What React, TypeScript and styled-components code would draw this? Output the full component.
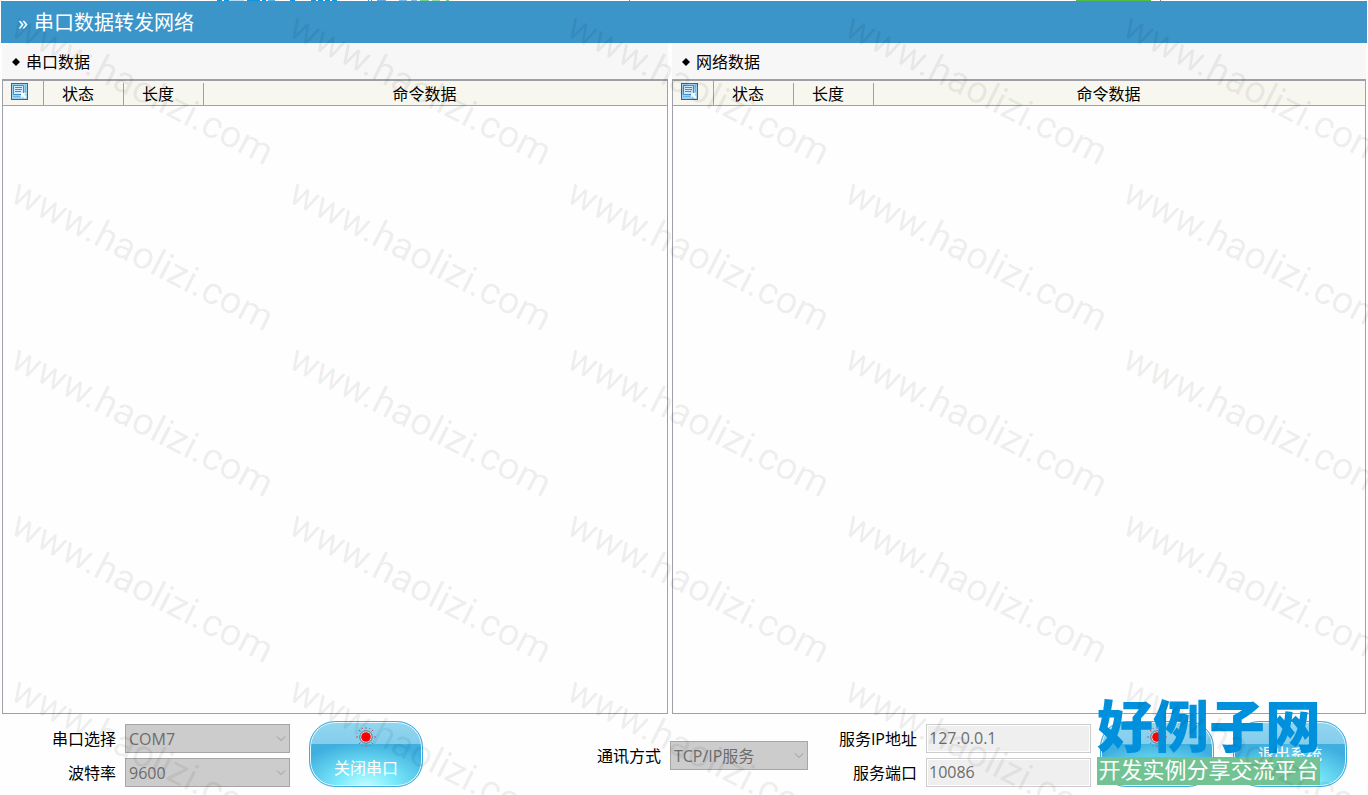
import React from "react";
import styled, { createGlobalStyle } from "styled-components";

const line = "#a0a0a8";

const GlobalStyle = createGlobalStyle`
  *, *::before, *::after { box-sizing: border-box; }
  body {
    margin: 0;
    background: #fefefe;
    color: #000;
    font: 16px/22px "Open Sans", "Noto Sans CJK SC", sans-serif;
  }
  button, input, select { font: inherit; }
`;

const Page = styled.div`
  position: relative;
  display: flex;
  flex-direction: column;
  min-height: 100vh;
  overflow: hidden;
`;

/* start, width and colour of each sliver of the window behind the title bar */
const slivers: [number, number, string][] = [
  [217, 5, "#0f95dd"],
  [224, 5, "#0f95dd"],
  [229, 15, "#b5def4"],
  [247, 13, "#0f95dd"],
  [262, 4, "#0f95dd"],
  [268, 7, "#4fb2e6"],
  [290, 5, "#0f95dd"],
  [311, 5, "#0f95dd"],
  [318, 5, "#0f95dd"],
  [325, 5, "#0f95dd"],
  [332, 5, "#0f95dd"],
  [368, 1, "#2b98dc"],
  [371, 1, "#2b98dc"],
  [377, 9, "#5aa9ea"],
  [399, 8, "#7dbcec"],
  [411, 6, "#7dbcec"],
  [420, 9, "#6fd08a"],
  [432, 8, "#8fdca4"],
  [446, 3, "#6fd08a"],
  [629, 1, "#808080"],
  [1076, 75, "#55bb46"],
  [1160, 1, "#808080"],
];

const TopStrip = styled.div`
  height: 1px;
  background: ${slivers.map(([x, w, c]) => `linear-gradient(${c}, ${c}) ${x}px 0 / ${w}px 1px no-repeat`).join(", ")};
`;

const TitleBar = styled.header`
  display: flex;
  align-items: center;
  height: 42px;
  margin: 0 1px;
  padding: 2px 17px 0;
  background: #3b95c9;
  color: #fff;
`;

const Title = styled.h1`
  display: flex;
  gap: 6px;
  margin: 0;
  font-size: 20px;
  line-height: 28px;
  font-weight: 400;
`;

const Panels = styled.main`
  flex: 1;
  display: grid;
  grid-template-columns: 666fr 694fr;
  gap: 4px;
  padding: 0 2px;
`;

const Panel = styled.section`
  display: flex;
  flex-direction: column;
  min-width: 0;
`;

const PanelTitle = styled.h2`
  display: flex;
  align-items: center;
  gap: 6px;
  height: 36px;
  margin: 0;
  padding: 2px 10px 0;
  background: #f7f7f7;
  font-size: 16px;
  line-height: 22px;
  font-weight: 400;
`;

const TableFrame = styled.div`
  flex: 1;
  border: 1px solid ${line};
  border-top-width: 2px;
`;

const Table = styled.table`
  width: 100%;
  table-layout: fixed;
  border-collapse: separate;
  border-spacing: 0;
`;

const HeadCell = styled.th<{ $width?: number; $shift?: number; $short?: boolean }>`
  width: ${(p) => (p.$width ? `${p.$width}px` : "auto")};
  height: 25px;
  padding: 2px ${(p) => p.$shift ?? 0}px 0 0;
  border-bottom: 1px solid ${line};
  background:
    linear-gradient(${line}, ${line}) right bottom / ${(p) => (p.$width ? "1px" : "0")} ${(p) => (p.$short ? "22px" : "100%")} no-repeat,
    #f7f7ef;
  font-weight: 400;
  line-height: 22px;
  vertical-align: top;
  svg { display: block; margin-left: 8px; }
`;

const Footer = styled.footer`
  display: flex;
  align-items: center;
  height: 81px;
  padding: 0 21px 1px 52px;
`;

const Fields = styled.form`
  display: grid;
  grid-template-columns: auto auto;
  align-items: center;
  gap: 5px 9px;
  margin-top: 2px;
`;

const Spacer = styled.div`
  flex: 1;
`;

const Gap = styled.div<{ $size: number }>`
  flex: 0 0 ${(p) => p.$size}px;
`;

const Label = styled.label`
  padding-top: 1px;
  text-align: right;
  white-space: nowrap;
`;

const SelectBox = styled.div<{ $width: number }>`
  position: relative;
  width: ${(p) => p.$width}px;
  height: 29px;
  svg { position: absolute; right: 4px; top: 11px; }
`;

const Select = styled.select`
  appearance: none;
  display: block;
  width: 100%;
  height: 100%;
  padding: 1px 3px 0;
  border: 1px solid #a6a6a6;
  border-radius: 0;
  background: #ccc;
  color: #6d6d6d;
  opacity: 1;
`;

const TextInput = styled.input`
  width: 165px;
  height: 29px;
  padding: 0 2px;
  border: 1px solid #ccc;
  background: #efefef;
  box-shadow: inset 0 0 0 1px #fff;
  color: #6d6d6d;
`;

const GlossButton = styled.button`
  display: flex;
  flex-direction: column;
  align-items: center;
  justify-content: center;
  gap: 10px;
  width: 114px;
  height: 66px;
  padding: 0;
  border: 1px solid #3fabdf;
  border-radius: 26px;
  background:
    linear-gradient(#92d6ef 0, #84cdec 22px, transparent 22px),
    radial-gradient(ellipse 76px 44px at 50% 100%, #c4fbff 0, #7cebfb 36%, #3fafdf 100%);
  box-shadow: inset 0 0 0 1px #e6f8ff;
  color: #fff;
  svg { margin-top: -2px; }
`;

const WatermarkLayer = styled.div`
  position: absolute;
  inset: 0;
  display: grid;
  grid-template-columns: repeat(5, 278px);
  grid-auto-rows: 166px;
  overflow: hidden;
  pointer-events: none;
`;

const Watermark = styled.span`
  color: rgba(0, 0, 0, 0.07);
  font: 38px/36px Roboto, sans-serif;
  white-space: nowrap;
  transform: translate(8px, 4px) rotate(27deg);
  transform-origin: 0 32px;
`;

const SiteBadge = styled.aside`
  position: absolute;
  right: 48px;
  bottom: 10px;
  width: 223px;
`;

const SiteName = styled.div`
  color: #0090dc;
  font-size: 56px;
  line-height: 64px;
  font-weight: 900;
  white-space: nowrap;
`;

const SiteSlogan = styled.div`
  height: 28px;
  background: #72c294;
  color: #fff;
  font-size: 22px;
  line-height: 24px;
  text-align: center;
  white-space: nowrap;
`;

const Diamond = () => (
  <svg width="8" height="8" viewBox="0 0 8 8" aria-hidden="true">
    <path d="M4 0L8 4L4 8L0 4Z" />
  </svg>
);

const ListIcon = () => (
  <svg width="17" height="17" viewBox="0 0 17 17" aria-hidden="true">
    <rect x=".5" y=".5" width="16" height="16" fill="#9ed2f3" stroke="#4c5f6e" />
    <path d="M3 2.500H12.500V10M2.500 2V11.500H10" fill="none" stroke="#3d8fcb" />
    <path d="M3 3H12V11H3Z" fill="#d4ecfc" />
    <path d="M4 4.500H11M4 6.500H11M4 8.500H10" stroke="#3d8fcb" />
    <path d="M2 13.500H9M14.500 2V9" stroke="#6cb4e4" />
    <path d="M10 10H15L13.500 11.500L15.500 14L14 15.500L11.500 13.500L10 15Z" fill="#fff" />
  </svg>
);

const Chevron = () => (
  <svg width="10" height="7" viewBox="0 0 10 7" fill="none" stroke="#9a9a9a" aria-hidden="true">
    <path d="M1 1.500L5 5.500L9 1.500" />
  </svg>
);

const Lamp = () => (
  <svg width="20" height="20" viewBox="0 0 20 20" aria-hidden="true">
    <path
      d="M10 0V2M10 18V20M0 10H2M18 10H20M3 3L4.500 4.500M15.500 15.500L17 17M3 17L4.500 15.500M15.500 4.500L17 3M6 1L6.500 2M14 1L13.500 2M6 19L6.500 18M14 19L13.500 18"
      stroke="#c8505c"
    />
    <circle cx="10" cy="10" r="6.200" fill="#d8eef5" stroke="#4d6f80" />
    <circle cx="10" cy="10" r="4.800" fill="#f00" />
  </svg>
);

const DataPanel = ({ title }: { title: string }) => (
  <Panel>
    <PanelTitle>
      <Diamond />
      {title}
    </PanelTitle>
    <TableFrame>
      <Table aria-label={title}>
        <thead>
          <tr>
            <HeadCell scope="col" $width={41}>
              <ListIcon />
            </HeadCell>
            <HeadCell scope="col" $width={80} $shift={12} $short>
              状态
            </HeadCell>
            <HeadCell scope="col" $width={80} $shift={12} $short>
              长度
            </HeadCell>
            <HeadCell scope="col" $shift={22}>
              命令数据
            </HeadCell>
          </tr>
        </thead>
        <tbody />
      </Table>
    </TableFrame>
  </Panel>
);

const SelectField = ({ id, label, value, width = 165 }: { id: string; label: string; value: string; width?: number }) => (
  <>
    <Label htmlFor={id}>{label}</Label>
    <SelectBox $width={width}>
      <Select id={id} disabled defaultValue={value}>
        <option>{value}</option>
      </Select>
      <Chevron />
    </SelectBox>
  </>
);

const InputField = ({ id, label, value }: { id: string; label: string; value: string }) => (
  <>
    <Label htmlFor={id}>{label}</Label>
    <TextInput id={id} disabled defaultValue={value} />
  </>
);

export default function App() {
  return (
    <Page>
      <GlobalStyle />
      <TopStrip />
      <TitleBar>
        <Title>
          <span>»</span>
          <span>串口数据转发网络</span>
        </Title>
      </TitleBar>
      <Panels>
        <DataPanel title="串口数据" />
        <DataPanel title="网络数据" />
      </Panels>
      <Footer>
        <Fields>
          <SelectField id="port" label="串口选择" value="COM7" />
          <SelectField id="baud" label="波特率" value="9600" />
        </Fields>
        <Gap $size={19} />
        <GlossButton type="button">
          <Lamp />
          关闭串口
        </GlossButton>
        <Spacer />
        <Fields>
          <SelectField id="mode" label="通讯方式" value="TCP/IP服务" width={138} />
        </Fields>
        <Gap $size={31} />
        <Fields>
          <InputField id="ip" label="服务IP地址" value="127.0.0.1" />
          <InputField id="service-port" label="服务端口" value="10086" />
        </Fields>
        <Gap $size={9} />
        <GlossButton type="button" aria-label="关闭服务">
          <Lamp />
          <span>&nbsp;</span>
        </GlossButton>
        <Gap $size={19} />
        <GlossButton type="button">退出系统</GlossButton>
      </Footer>
      <SiteBadge>
        <SiteName>好例子网</SiteName>
        <SiteSlogan>开发实例分享交流平台</SiteSlogan>
      </SiteBadge>
      <WatermarkLayer aria-hidden="true">
        {Array.from({ length: 25 }, (_, i) => (
          <Watermark key={i}>www.haolizi.com</Watermark>
        ))}
      </WatermarkLayer>
    </Page>
  );
}
